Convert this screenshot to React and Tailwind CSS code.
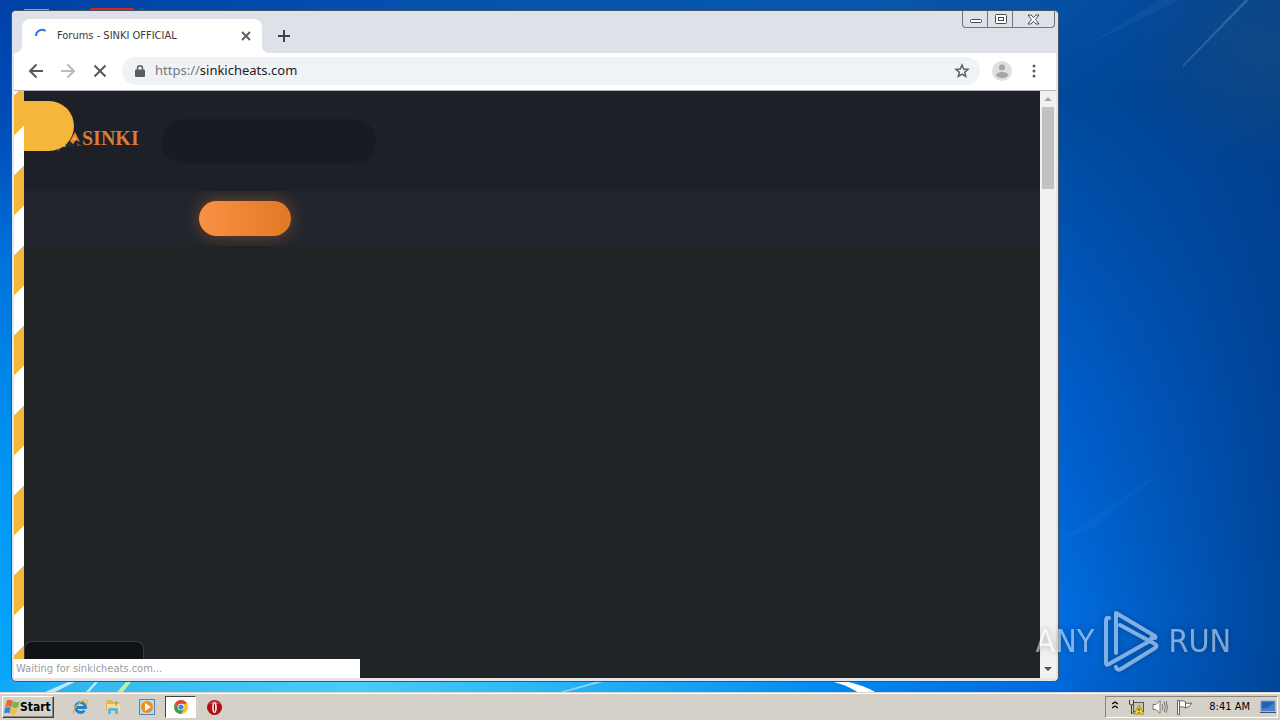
import React from 'react';

const systemFont = "font-['DejaVu_Sans_Condensed','DejaVu_Sans',sans-serif]";

function Wallpaper() {
  return (
    <svg className="absolute inset-0 h-full w-full" viewBox="0 0 1280 720" preserveAspectRatio="none" aria-hidden="true">
      <defs>
        <linearGradient id="base" x1="0" y1="0" x2="0" y2="1">
          <stop offset="0" stopColor="#0552a8" />
          <stop offset="0.13" stopColor="#004a9c" />
          <stop offset="0.55" stopColor="#0060d0" />
          <stop offset="0.85" stopColor="#0071e6" />
          <stop offset="1" stopColor="#0066d8" />
        </linearGradient>
        <linearGradient id="left" x1="0" y1="0" x2="0" y2="1">
          <stop offset="0" stopColor="#0040a8" />
          <stop offset="0.2" stopColor="#0050bc" />
          <stop offset="0.36" stopColor="#0072dc" />
          <stop offset="0.65" stopColor="#0095f2" />
          <stop offset="1" stopColor="#08aaff" />
        </linearGradient>
        <linearGradient id="top" x1="0" y1="0" x2="1" y2="0">
          <stop offset="0" stopColor="#0040a8" />
          <stop offset="0.35" stopColor="#0552ae" />
          <stop offset="0.7" stopColor="#0857ab" />
          <stop offset="0.85" stopColor="#034a96" stopOpacity="0" />
        </linearGradient>
        <linearGradient id="floor" x1="0" y1="0" x2="1" y2="0">
          <stop offset="0" stopColor="#10a8f8" />
          <stop offset="0.08" stopColor="#38baf0" />
          <stop offset="0.28" stopColor="#48cdf8" />
          <stop offset="0.5" stopColor="#1ba9f6" />
          <stop offset="0.66" stopColor="#0088f0" />
          <stop offset="0.82" stopColor="#006ae0" />
          <stop offset="0.84" stopColor="#006ae0" stopOpacity="0" />
        </linearGradient>
        <linearGradient id="right" x1="0" y1="0" x2="1" y2="0">
          <stop offset="0" stopColor="#003c88" stopOpacity="0" />
          <stop offset="1" stopColor="#003c88" stopOpacity="0.8" />
        </linearGradient>
        <radialGradient id="haze">
          <stop offset="0" stopColor="#174c80" stopOpacity="0.7" />
          <stop offset="1" stopColor="#174c80" stopOpacity="0" />
        </radialGradient>
      </defs>
      <rect width="1280" height="720" fill="url(#base)" />
      <rect width="600" height="720" fill="url(#left)" />
      <rect width="1280" height="14" fill="url(#top)" />
      <rect x="1040" width="240" height="720" fill="url(#right)" />
      <ellipse cx="1275" cy="50" rx="150" ry="120" fill="url(#haze)" />
      <rect y="680" width="1280" height="40" fill="url(#floor)" />
      <path d="M1182 66 1245 0h4L1183 67z" fill="#6a9cc9" opacity=".35" />
      <path d="M1085 46 1160 0h20z" fill="#5c95cc" opacity=".1" />
      <path d="M1060 540 1170 465 1090 530z" fill="#268cec" opacity=".1" />
      <path d="M45 692 68 682h7l-20 10zM86 692l9-10h3l-9 10z" fill="#fff" opacity=".7" />
      <path d="m117 692 9-10h5l-8 10z" fill="#b8eeb0" />
      <path d="m560 692 35-10h8l-38 10z" fill="#b8e9ff" opacity=".7" />
      <path d="M830 681h14q20 4 33 12h-18q-14-9-29-12z" fill="#fff" />
      <rect x="24" y="9" width="25" height="2" fill="#8da7c5" />
      <rect x="90" y="8" width="44" height="4" rx="1" fill="#d3281f" />
    </svg>
  );
}

function CaptionButtons() {
  return (
    <div className="flex h-[17px] rounded-b border border-t-0 border-[#70757e] text-[#454a52]">
      <button aria-label="Minimize" className="flex w-[25px] justify-center border-r border-[#70757e] pt-[7px]">
        <svg width="13" height="6" viewBox="0 0 13 6"><rect x="1.500" y="1.500" width="11" height="3" rx="1" fill="#fff" stroke="currentColor" /></svg>
      </button>
      <button aria-label="Maximize" className="flex w-[25px] justify-center border-r border-[#70757e] pt-[3px]">
        <svg width="13" height="12" viewBox="0 0 13 12" fill="#fff" stroke="currentColor"><rect x="1.500" y=".5" width="11" height="9" rx="1" /><rect x="4.500" y="3.500" width="5" height="3" /></svg>
      </button>
      <button aria-label="Close window" className="flex w-[41px] justify-center pt-[3px]">
        <svg width="13" height="11" viewBox="0 0 13 11"><path d="M1 1h3l2.500 2.700L9 1h3L8.500 5.500 12 10H9L6.500 7.300 4 10H1l3.500-4.500z" fill="#fff" stroke="currentColor" /></svg>
      </button>
    </div>
  );
}

function TabStrip() {
  return (
    <div className="flex h-[42px] items-start justify-between bg-[#dee1e8] pr-[3px]">
      <div className="flex self-end pl-[2px]">
        <svg className="self-end" width="8" height="8" aria-hidden="true"><path d="M0 8Q8 8 8 0V8z" fill="#fff" /></svg>
        <div className="flex h-[34px] w-[240px] items-center rounded-t-lg bg-white pl-3 pr-[10px]">
          <svg width="16" height="16" viewBox="0 0 16 16" fill="none" stroke="#2f76e6" strokeWidth="2" aria-hidden="true"><path d="M2 8a6 6 0 0 1 9.500-5" /></svg>
          <span className="flex-1 whitespace-nowrap pl-[7px] text-[11px] leading-4 text-[#36393d]">Forums - SINKI OFFICIAL</span>
          <button aria-label="Close tab">
            <svg width="12" height="12" viewBox="0 0 12 12" stroke="#5b5f63" strokeWidth="2"><path d="m2 2 8 8m0-8-8 8" /></svg>
          </button>
        </div>
        <svg className="self-end" width="8" height="8" aria-hidden="true"><path d="M8 8Q0 8 0 0V8z" fill="#fff" /></svg>
        <button aria-label="New tab" className="ml-[7px]">
          <svg width="14" height="14" viewBox="0 0 14 14" stroke="#3f4347" strokeWidth="2"><path d="M7 1v12M1 7h12" /></svg>
        </button>
      </div>
      <CaptionButtons />
    </div>
  );
}

function Toolbar() {
  return (
    <div className="mx-[2px] flex h-[38px] items-center border-b border-[#b4b6b9] bg-white px-[14px] pb-[2px]">
      <div className="flex gap-4">
        <button aria-label="Back"><svg width="16" height="16" viewBox="0 0 16 16" fill="none" stroke="#555a5f" strokeWidth="2"><path d="M15 8H2m6.500-6.500L2 8l6.500 6.500" /></svg></button>
        <button aria-label="Forward"><svg width="16" height="16" viewBox="0 0 16 16" fill="none" stroke="#b9bbbe" strokeWidth="2"><path d="M1 8h13M7.500 1.500 14 8l-6.500 6.500" /></svg></button>
        <button aria-label="Stop loading"><svg width="16" height="16" viewBox="0 0 16 16" stroke="#555a5f" strokeWidth="2"><path d="m2.500 2.500 11 11m0-11-11 11" /></svg></button>
      </div>
      <div className="ml-[14px] flex h-7 flex-1 items-center rounded-full bg-[#f0f3f6] pl-[13px] pr-[10px]">
        <svg width="10" height="12" viewBox="0 0 10 12" aria-hidden="true"><path d="M2.500 5V3.300a2.500 2.500 0 0 1 5 0V5" fill="none" stroke="#5a5e63" strokeWidth="1.500" /><rect y="4.500" width="10" height="7.500" rx="1" fill="#5a5e63" /></svg>
        <label htmlFor="url" className="pl-[10px] font-['Noto_Sans',sans-serif] text-[13px] text-[#73777c]">https://</label>
        <input id="url" defaultValue="sinkicheats.com" className="min-w-0 flex-1 bg-transparent font-['Noto_Sans',sans-serif] text-[13px] text-[#202124] outline-none" />
        <button aria-label="Bookmark this page"><svg width="16" height="16" viewBox="0 0 16 16" fill="none" stroke="#5a5e63" strokeWidth="1.500"><path d="m8 2 1.700 4 4.300.400-3.300 2.800 1 4.300L8 11.200l-3.700 2.300 1-4.300L2 6.400 6.300 6z" /></svg></button>
      </div>
      <button aria-label="Profile" className="ml-3">
        <svg width="20" height="20" viewBox="0 0 20 20"><circle cx="10" cy="10" r="10" fill="#dedfe0" /><circle cx="10" cy="6.500" r="3" fill="#a3a5a7" /><ellipse cx="10" cy="14" rx="6" ry="3" fill="#a3a5a7" /></svg>
      </button>
      <button aria-label="Menu" className="ml-[14px]">
        <svg width="16" height="16" viewBox="0 0 16 16" fill="#5a5e63"><circle cx="8" cy="3" r="1.500" /><circle cx="8" cy="8" r="1.500" /><circle cx="8" cy="13" r="1.500" /></svg>
      </button>
    </div>
  );
}

function ForumPage() {
  return (
    <div className="relative mx-[2px] flex flex-1 overflow-hidden bg-[#212427]">
      <div className="w-[10px] bg-white bg-[linear-gradient(135deg,#f4b73b_25%,#fff_25%,#fff_50%,#f4b73b_50%,#f4b73b_75%,#fff_75%)] bg-[length:80px_80px] bg-[position:0_5px]" />
      <main className="flex min-w-0 flex-1 flex-col">
        <header className="flex h-[100px] items-start bg-[#1e2027] pt-[10px]">
          <button aria-label="Toggle sidebar" className="z-10 h-[50px] w-[50px] rounded-r-full bg-[#f4b73b]" />
          <a href="#home" className="-ml-5 mt-[22px] flex items-center">
            <svg width="28" height="30" viewBox="0 0 28 30" aria-hidden="true">
              <path d="m2 24 14-8 4-8 6 13-4-1-3 4-7-1-6 4z" fill="#262b33" />
              <path d="m16 18 5-9 5 10-4-2-3 4z" fill="#f28332" />
              <path d="m19 17 2-4 1 4z" fill="#ffc04b" />
              <path d="m3 29 2-5 1 3zm20-9 5 3h-5zM1 22l2-1 1 2z" fill="#704047" />
              <path d="m9 24 2-4 1 4z" fill="#8cad69" />
            </svg>
            <span className="font-['Liberation_Serif',serif] text-[20px] font-bold leading-6 text-[#dc7b36]">SINKI</span>
          </a>
          <input aria-label="Search forums" className="ml-[23px] mt-[18px] h-[45px] w-[214px] rounded-full bg-[#181b22] px-5 text-sm text-white outline-none" />
        </header>
        <nav className="flex h-[55px] items-start overflow-hidden bg-[#22252d] pl-[175px] pt-[10px]">
          <a href="#forums" aria-label="Forums" className="h-[35px] w-[92px] rounded-full bg-linear-to-r from-[#fb9142] to-[#e07826] shadow-[0_0_18px_#f2812c66]" />
        </nav>
        <div className="flex flex-1 items-end">
          <div className="h-[37px] w-[120px] rounded-t-lg border border-b-0 border-[#383a3d] bg-[#111213]" />
        </div>
      </main>
      <div className="flex w-4 flex-col items-center bg-[#f1f1f1]">
        <button aria-label="Scroll up" className="flex h-4 items-center"><svg width="8" height="4"><path d="m0 4 4-4 4 4z" fill="#a3a3a3" /></svg></button>
        <div className="h-[82px] w-3 bg-[#c1c1c1]" />
        <button aria-label="Scroll down" className="mt-auto flex h-[18px] items-center"><svg width="8" height="4"><path d="m0 0 4 4 4-4z" fill="#505050" /></svg></button>
      </div>
      <div role="status" className="absolute bottom-0 left-0 h-[19px] w-[346px] bg-white pl-[2px] text-[11px] leading-[19px] text-[#9a9c9f]">Waiting for sinkicheats.com...</div>
    </div>
  );
}

function Watermark() {
  return (
    <div className="pointer-events-none absolute bottom-[20px] right-[49px] flex items-center gap-[9px] text-[32px] leading-none text-white opacity-50 drop-shadow-[0_0_3px_#00000080]">
      <span>ANY</span>
      <svg width="56" height="62" viewBox="0 0 56 62" fill="none" stroke="currentColor" strokeWidth="4" strokeLinejoin="round" strokeLinecap="round">
        <path d="M6 8Q3 7 3 11v42q0 3 3 1l39-22M13 43V3l39 23q2 3-4 2M13 57q1 4 5 2l34-21q3-2 0-4L17 15" />
      </svg>
      <span>RUN</span>
    </div>
  );
}

function StartFlag() {
  return (
    <svg width="16" height="16" viewBox="0 0 15 15" aria-hidden="true">
      <path d="M3 1q3-1 5.500 1L7 7.500Q4 6 1 7.500z" fill="#e66a30" /><path d="M9 2q3 2 6 0l-2 6q-3 1-5.500-.5z" fill="#78b943" />
      <path d="M1 8q3-1 5.500 0L5 13.500q-2-1-5 0z" fill="#3d86cf" /><path d="M7 8q3 2 6 1l-2 5q-3 1-5.500-.5z" fill="#f4c22d" />
    </svg>
  );
}

function Taskbar() {
  return (
    <footer className="relative flex h-7 items-end border-t border-[#d7d3ca] bg-[#d6d1c8] px-[2px] pb-[2px] text-black shadow-[inset_0_1px_#fff]">
      <button className="flex h-[22px] w-[52px] items-center border border-b-[#424242] border-l-white border-r-[#424242] border-t-white pl-[1px] text-[12px] font-bold shadow-[inset_-1px_-1px_#88847e]"><StartFlag />Start</button>
      <div className="ml-[18px] flex items-center">
        <button aria-label="Internet Explorer" className="flex h-[22px] w-4 items-center">
          <svg width="16" height="16" viewBox="0 0 16 16" fill="none"><path d="M12.500 11.500A5 5 0 1 1 13.500 8.500H4" stroke="#1f83d4" strokeWidth="2.800" /><path d="M2 15C-2 12 10-1 15 1.500c1 1 0 3-1 4.500" stroke="#e9b834" strokeWidth="1.200" /></svg>
        </button>
        <button aria-label="File Explorer" className="ml-[17px] flex h-[22px] items-center">
          <svg width="16" height="16" viewBox="0 0 16 16"><path d="M1 3q0-2 2-2h4l1 2h6v9H1z" fill="#dbb75a" /><path d="M2 5h13v8H2z" fill="#f8df87" /><path d="M3 15v-5q0-1 2-1h6q2 0 2 1v5h-3v-3H6v3z" fill="#5eb7df" /><path d="M11 2v5" stroke="#4ba8a0" /></svg>
        </button>
        <button aria-label="Media Player" className="ml-[18px] flex h-[22px] items-center">
          <svg width="16" height="16" viewBox="0 0 16 16"><rect x=".5" y=".5" width="15" height="15" fill="#b9dbf0" stroke="#4d86b6" /><circle cx="8" cy="8" r="6" fill="#f38b1e" /><path d="m6 4 6 4-6 4z" fill="#fff" /></svg>
        </button>
        <button aria-label="Chrome" className="ml-[10px] flex h-[22px] w-[31px] items-center justify-center border border-b-white border-l-[#424242] border-r-white border-t-[#424242] bg-white">
          <svg width="14" height="14" viewBox="0 0 14 14"><circle cx="7" cy="7" r="7" fill="#f6c12e" /><path d="M1 3.500a7 7 0 0 1 12 0L7 4 5 9z" fill="#dc4436" /><path d="M1 3.500A7 7 0 0 0 7 14l3-5-5 0z" fill="#389c55" /><circle cx="7" cy="7" r="3.300" fill="#fff" /><circle cx="7" cy="7" r="2.600" fill="#477fe7" /></svg>
        </button>
        <button aria-label="Opera" className="ml-[11px] flex h-[22px] items-center">
          <svg width="15" height="15" viewBox="0 0 15 15"><circle cx="7.500" cy="7.500" r="7.500" fill="#af1018" /><path d="M2 4q5-6 11 0z" fill="#e05a55" opacity=".7" /><ellipse cx="7.500" cy="7.500" rx="2.300" ry="5.500" fill="#fff" /><ellipse cx="7.500" cy="7.500" rx=".7" ry="4.300" fill="#8d1017" /></svg>
        </button>
      </div>
      <div className="ml-auto flex h-[22px] items-center border border-b-white border-l-[#88847e] border-r-white border-t-[#88847e] pl-[6px] pr-[1px]">
        <button aria-label="Show hidden icons" className="mb-1"><svg width="6" height="8" viewBox="0 0 6 8" fill="none" stroke="#000" strokeWidth="1.300"><path d="m0 3 3-2 3 2M0 7l3-2 3 2" /></svg></button>
        <button aria-label="Network" className="ml-[10px]">
          <svg width="17" height="16" viewBox="0 0 17 16"><rect x="5.500" y="3.500" width="10" height="9" fill="#c7c5bd" stroke="#555" /><path d="M1.500 1v4q0 1 2 1v9M5.500 1v4q0 1-2 1m0 8h5" stroke="#444" fill="none" /><path d="m11 6 5 9H6z" fill="#f7d52b" stroke="#b08e10" /><path d="M11 9v3m0 1v1" stroke="#222" /></svg>
        </button>
        <button aria-label="Volume" className="ml-[7px]">
          <svg width="17" height="16" viewBox="0 0 17 16" fill="none" stroke="#777"><path d="M1 5.500h3l4-4v13l-4-4H1z" fill="#fff" /><path d="M10 5q2 3 0 6m2-8q3 5 0 10m2-11q3 6 0 12" /></svg>
        </button>
        <button aria-label="Action center" className="ml-[7px]">
          <svg width="17" height="16" viewBox="0 0 17 16" fill="#fff" stroke="#666"><path d="M1.500 1.500h2v14h-2zM3.500 2q3-1 6 1v6q-3-2-6-1zM9.500 4q3 1 6 0-1 4-6 5z" /></svg>
        </button>
        <time className="ml-4 whitespace-nowrap text-[11px]">8:41 AM</time>
        <button aria-label="Show desktop" className="ml-[10px]">
          <svg width="16" height="14" viewBox="0 0 16 14"><rect x="1" y="1" width="14" height="10" fill="#2460b5" stroke="#7c9dc9" /><path d="M2 8q7 1 12-6v8H2z" fill="#4382cf" /><path d="M0 12h16v1H0z" fill="#344f76" /></svg>
        </button>
      </div>
    </footer>
  );
}

export default function App() {
  return (
    <div className={`relative flex min-h-screen flex-col overflow-hidden ${systemFont}`}>
      <Wallpaper />
      <div className="relative flex flex-1 flex-col pb-[10px] pl-[11px] pr-[221px] pt-[10px]">
        <section aria-label="Browser" className="flex flex-1 flex-col overflow-hidden rounded-[5px] border border-[#465563] bg-[#e3e5e9] pb-[3px]">
          <TabStrip />
          <Toolbar />
          <ForumPage />
        </section>
        <Watermark />
      </div>
      <Taskbar />
    </div>
  );
}
